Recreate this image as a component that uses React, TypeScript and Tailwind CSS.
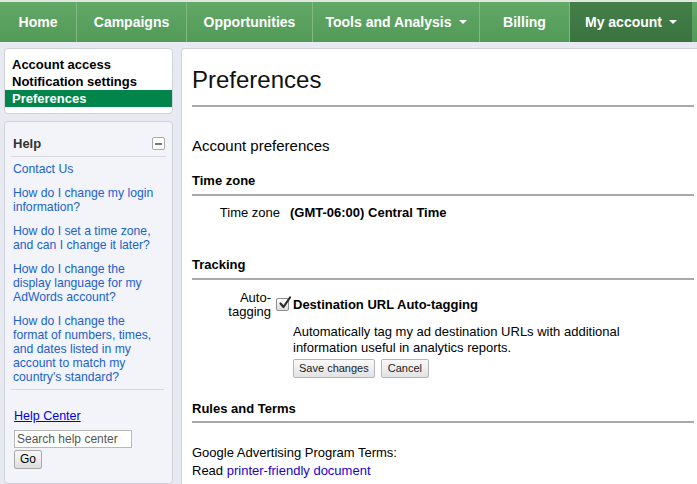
import { useState } from 'react'

const NAV = [
  { label: 'Home', w: 'w-[77px]' },
  { label: 'Campaigns', w: 'w-[110px]' },
  { label: 'Opportunities', w: 'w-[126px]' },
  { label: 'Tools and Analysis', w: 'w-[167px]', caret: true },
  { label: 'Billing', w: 'w-[90px]' },
]

const HELP_LINKS = [
  'Contact Us',
  'How do I change my login information?',
  'How do I set a time zone, and can I change it later?',
  'How do I change the display language for my AdWords account?',
  "How do I change the format of numbers, times, and dates listed in my account to match my country's standard?",
]

function Caret() {
  return <span className="ml-[7px] inline-block h-0 w-0 border-x-[4px] border-t-[4px] border-x-transparent border-t-white align-middle" />
}

function TopNav() {
  return (
    <div className="flex h-[42px] border-t-[2px] border-[#dfe8df] bg-gradient-to-b from-[#62a867] to-[#529a58] text-[14px] font-bold text-white">
      {NAV.map((n) => (
        <div key={n.label} className={`${n.w} flex items-center justify-center border-r border-[#7fba83]`}>
          {n.label}
          {n.caret && <Caret />}
        </div>
      ))}
      <div className="flex w-[122px] items-center justify-center bg-gradient-to-b from-[#447f48] to-[#3a733e]">
        My account
        <Caret />
      </div>
      <div className="flex-1" />
    </div>
  )
}

function Sidebar() {
  return (
    <div className="flex w-[169px] flex-col gap-[7px]">
      <div className="rounded-[4px] border border-[#cfd2d8] bg-white pt-[7px] pb-[6px] text-[13px] font-bold leading-[17px] text-black">
        <div className="px-[7px]">Account access</div>
        <div className="px-[7px]">Notification settings</div>
        <div className="bg-[#01854a] px-[7px] text-white">Preferences</div>
      </div>
      <div className="flex-1 rounded-[4px] border border-[#cfd2d8] bg-[#f3f4f9] px-[6px]">
        <div className="flex items-center justify-between pt-[14px] pb-[5px] pl-[2px] pr-[1px] leading-[15px]">
          <span className="text-[13px] font-bold text-[#333]">Help</span>
          <span className="flex h-[13px] w-[13px] items-center justify-center rounded-[2px] border border-[#a9a9a9] bg-white">
            <span className="h-[2px] w-[7px] bg-[#777]" />
          </span>
        </div>
        <div className="border-t border-[#d6d8dc] pt-[5px]">
          {HELP_LINKS.map((l, i) => (
            <div
              key={l}
              className={`${i === HELP_LINKS.length - 1 ? 'mb-[5px]' : 'mb-[10px]'} pl-[2px] pr-[4px] text-[12.2px] leading-[14px] text-[#1a62cc]`}
            >
              {l}
            </div>
          ))}
        </div>
        <div className="mr-[2px] border-t border-[#d6d8dc] pt-[19px] pl-[3px]">
          <div className="text-[12.5px] leading-[15px] text-[#0000ee] underline">Help Center</div>
          <input
            className="mt-[6px] block h-[18px] w-[118px] border border-[#b9b9b9] bg-white px-[2px] text-[12px] text-[#555] outline-none placeholder:text-[#555]"
            placeholder="Search help center"
            defaultValue=""
          />
          <button className="mt-[2px] block h-[19px] w-[28px] rounded-[2px] border border-[#aaa] bg-gradient-to-b from-[#f8f8f8] to-[#dedede] text-[12px] leading-[17px] text-black">
            Go
          </button>
        </div>
      </div>
    </div>
  )
}

function SectionTitle({ children }: { children: string }) {
  return <div className="border-b-[2px] border-[#a9a9a9] pb-[3px] text-[13px] font-bold text-black">{children}</div>
}

function CheckBox({ checked, onToggle }: { checked: boolean; onToggle: () => void }) {
  return (
    <span
      onClick={onToggle}
      className="relative flex h-[13px] w-[13px] cursor-pointer items-center justify-center rounded-[2px] border border-[#8e8e8e] bg-gradient-to-b from-white to-[#dcdcdc]"
    >
      {checked && (
        <svg viewBox="0 0 14 14" className="absolute left-[1px] top-[-3px] h-[14px] w-[14px]">
          <path d="M2.5 7.5 L5.5 11 L12 1.5" fill="none" stroke="#2b2b2b" strokeWidth="2.2" strokeLinecap="round" strokeLinejoin="round" />
        </svg>
      )}
    </span>
  )
}

function Main() {
  const [checked, setChecked] = useState(true)
  return (
    <div className="flex-1 rounded-tl-[4px] border-t border-l border-[#cfd2d8] bg-white pl-[10px] pr-[3px] pt-[16px] text-[13px] text-black">
      <h1 className="border-b-[2px] border-[#a9a9a9] pb-[10px] text-[24px] leading-[30px] text-[#111]">Preferences</h1>
      <div className="mt-[30px] text-[15px] leading-[18px]">Account preferences</div>
      <div className="mt-[16px]">
        <SectionTitle>Time zone</SectionTitle>
      </div>
      <div className="mt-[7px] flex items-baseline">
        <div className="w-[98px] pr-[10px] text-right">Time zone</div>
        <div className="font-bold">(GMT-06:00) Central Time</div>
      </div>
      <div className="mt-[33px]">
        <SectionTitle>Tracking</SectionTitle>
      </div>
      <div className="mt-[11px] flex">
        <div className="w-[80px] pr-[1px] text-right leading-[14px]">
          Auto-
          <br />
          tagging
        </div>
        <div className="ml-[4px] mt-[7px]">
          <CheckBox checked={checked} onToggle={() => setChecked(!checked)} />
        </div>
        <div className="ml-[4px] pt-[6px]">
          <div className="font-bold leading-[15px]">Destination URL Auto-tagging</div>
          <div className="mt-[12px] leading-[16px]">
            Automatically tag my ad destination URLs with additional
            <br />
            information useful in analytics reports.
          </div>
          <div className="mt-[3px] flex gap-[6px]">
            <button className="h-[19px] rounded-[2px] border border-[#b5b5b5] bg-gradient-to-b from-[#fafafa] to-[#e2e2e2] px-[5px] text-[11px] text-[#222]">
              Save changes
            </button>
            <button className="h-[19px] rounded-[2px] border border-[#b5b5b5] bg-gradient-to-b from-[#fafafa] to-[#e2e2e2] px-[6px] text-[11px] text-[#222]">
              Cancel
            </button>
          </div>
        </div>
      </div>
      <div className="mt-[21px]">
        <SectionTitle>Rules and Terms</SectionTitle>
      </div>
      <div className="mt-[21px] leading-[18px]">
        <div>Google Advertising Program Terms:</div>
        <div>
          Read <span className="text-[#2200cc]">printer-friendly document</span>
        </div>
      </div>
    </div>
  )
}

export default function App() {
  return (
    <div className="h-[484px] w-[697px] overflow-hidden bg-[#e8eaf1] font-['Liberation_Sans',Arial,sans-serif]">
      <TopNav />
      <div className="flex h-[442px] gap-[8px] pt-[6px] pl-[4px]">
        <Sidebar />
        <Main />
      </div>
    </div>
  )
}
